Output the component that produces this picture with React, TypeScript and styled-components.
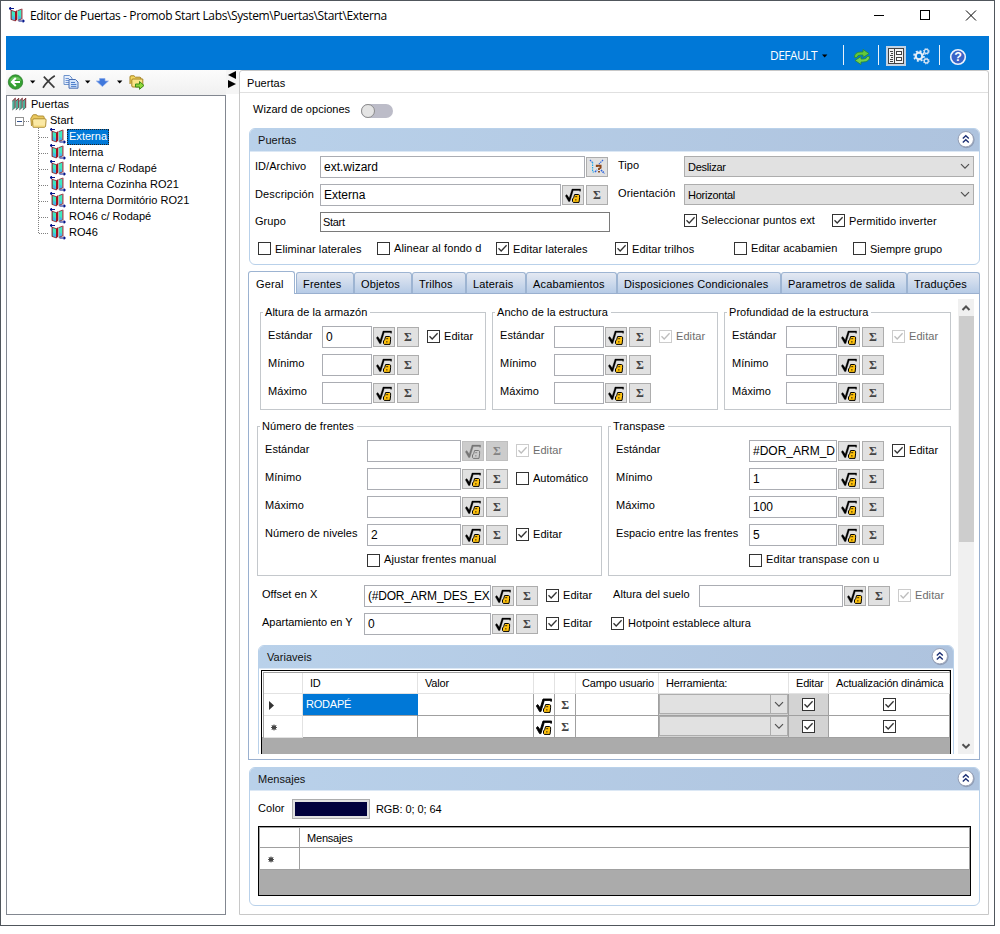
import React from "react";
import styled, { createGlobalStyle, css } from "styled-components";

const Global = createGlobalStyle`
  html, body { margin: 0; padding: 0; background: #fff; }
  body { font-family: "Liberation Sans", Arial, sans-serif; font-size: 11px; line-height: 14px; letter-spacing: 0.04px; color: #000; overflow: hidden; }
  *, *::before, *::after { box-sizing: border-box; }
  svg { display: block; flex: none; }
`;

/* ---------- window frame ---------- */
const Window = styled.div`
  width: 995px; height: 926px; border: 1px solid #50565c; background: #fff;
  display: flex; flex-direction: column;
`;
const TitleBar = styled.header`
  height: 35px; flex: none; display: flex; align-items: flex-start; padding: 6px 0 0 8px;
`;
const Title = styled.h1`
  margin: 1px 0 0 5px; flex: 1; font: 400 12px/16px "Open Sans", "Noto Sans", sans-serif; letter-spacing: -0.37px; white-space: nowrap;
`;
const WindowButtons = styled.div`
  display: flex; gap: 34px; padding: 3px 17px 0 0;
`;
const Ribbon = styled.div`
  height: 34px; flex: none; margin: 0 5px; background: #0078d7; display: flex; justify-content: flex-end; padding-right: 21px;
`;
const Profile = styled.span`
  display: flex; align-items: center; gap: 5px; margin: 7px 15px 0 0; height: 28px; padding-bottom: 2px;
  color: #fff; font: 400 12px/16px "Open Sans", "Noto Sans", sans-serif; letter-spacing: -0.55px;
`;
const RibbonDivider = styled.i<{ $gap: number }>`
  width: 1px; height: 20px; margin: 9px ${(p) => p.$gap}px 0 0; background: #e8f1fa;
`;
const RibbonIcon = styled.span<{ $gap: number; $top: number; $active?: boolean }>`
  display: grid; place-items: center; width: 20px; height: 20px;
  margin: ${(p) => p.$top}px ${(p) => p.$gap}px 0 0;
  background: ${(p) => (p.$active ? "#c3d3e3" : "transparent")};
`;
const Workspace = styled.div`
  flex: 1; display: flex; padding: 0 5px; min-height: 0;
`;

/* ---------- left side ---------- */
const Sidebar = styled.aside`
  width: 220px; flex: none; display: flex; flex-direction: column;
`;
const Toolbar = styled.div`
  height: 25px; flex: none; display: flex; align-items: center; padding: 0 0 1px 1px;
  background: linear-gradient(#fcfcfc, #f0f0f0);
`;
const Tool = styled.span<{ $w: number }>`
  width: ${(p) => p.$w}px; display: flex;
`;
const Tree = styled.div`
  height: 820px; border: 1px solid #828790; background: #fff;
`;
const TreeRow = styled.div<{ $indent: number }>`
  position: relative; height: 16px; display: flex; align-items: flex-start; padding-left: ${(p) => p.$indent}px;
`;
const TreeText = styled.span<{ $selected?: boolean }>`
  height: 16px; padding: 0 2px; line-height: 17px; white-space: nowrap; letter-spacing: 0.02px;
  ${(p) => p.$selected && css`background: #0078d7; color: #fff; outline: 1px dotted #222; outline-offset: -1px; margin-top: 1px; line-height: 15px;`}
`;
const Expander = styled.i`
  width: 9px; height: 9px; margin: 5px 0 0 0; border: 1px solid #919191; position: relative;
  &::after { content: ""; position: absolute; left: 1px; right: 1px; top: 3px; height: 1px; background: #33518f; }
`;
const Dots = styled.i<{ $w: number }>`
  width: ${(p) => p.$w}px; height: 1px; margin-top: 9px;
  background: repeating-linear-gradient(90deg, #808080 0 1px, transparent 1px 2px);
`;
const Children = styled.div`
  margin-left: 31px;
  background: repeating-linear-gradient(#808080 0 1px, transparent 1px 2px) 0 0 / 1px 106px no-repeat;
`;
const Spacer = styled.i<{ $w: number }>`
  width: ${(p) => p.$w}px; flex: none;
`;
const FolderWrap = styled.span`
  margin-top: 2px;
`;
const RootWrap = styled.span`
  margin-top: 1px;
`;
const Splitter = styled.div`
  width: 13px; flex: none; padding: 1px 0 0 2px; background: linear-gradient(#f5f5f5, #f5f5f5) 0 0 / 13px 24px no-repeat;
`;

/* ---------- right side ---------- */
const Main = styled.main`
  width: 750px; height: 845px; border: 1px solid #c8c8c8; border-radius: 3px 3px 0 0;
`;
const MainHeader = styled.div`
  height: 22px; border-bottom: 1px solid #e0e0e0; padding: 5px 0 0 7px;
`;
const WizardRow = styled.div`
  height: 35px; display: flex; justify-content: space-between; width: 153px; padding: 9px 0 0 13px;
`;
const Toggle = styled.i`
  width: 32px; height: 14px; margin-top: 2px; border-radius: 7px; background: #bcbcc8;
  &::after { content: ""; display: block; width: 14px; height: 14px; border-radius: 7px; border: 1px solid #8c8c8c; background: #e4e4e4; }
`;
const Panel = styled.section<{ $h: number; $w: number; $ml: number; $mt?: number }>`
  width: ${(p) => p.$w}px; height: ${(p) => p.$h}px; margin: ${(p) => p.$mt ?? 0}px 0 0 ${(p) => p.$ml}px;
  border: 1px solid #b9d1ea; border-radius: 6px; background: #fff; overflow: hidden;
`;
const PanelHeader = styled.div`
  height: 22px; display: flex; justify-content: space-between; padding: 4px 4px 0 8px;
  background: linear-gradient(90deg, #b9d1ea, #aec3de);
`;
const PanelTitle = styled.span`
  color: #111;
`;
const CollapseIcon = styled.span`
  margin-top: -3px;
`;
const PanelBody = styled.div<{ $pad: string }>`
  padding: ${(p) => p.$pad}; border-top: 1px solid #dce8f5;
`;

/* ---------- form parts ---------- */
const Row = styled.div<{ $cols: string; $h?: number }>`
  display: grid; grid-template-columns: ${(p) => p.$cols}; justify-items: start; align-items: start;
  height: ${(p) => p.$h ?? 28}px; white-space: nowrap;
`;
const Label = styled.span<{ $top?: number; $ls?: number }>`
  margin-top: ${(p) => p.$top ?? 2}px; letter-spacing: ${(p) => p.$ls ?? 0.05}px; white-space: nowrap;
`;
const Input = styled.div<{ $w: number; $small?: boolean; $tight?: boolean }>`
  width: ${(p) => p.$w}px; height: 22px; border: 1px solid #abadb3; background: #fff;
  padding: 3px 0 0 3px; font-size: 12px; letter-spacing: ${(p) => (p.$tight ? -0.2 : 0)}px; white-space: nowrap;
  ${(p) => p.$small && css`height: 20px; border-color: #7a7a7a; padding: 2px 0 0 2px; font-size: 11px; letter-spacing: -0.3px;`}
`;
const Button = styled.span<{ $disabled?: boolean }>`
  width: 22px; height: 20px; margin-top: 1px; display: grid; place-items: center;
  border: 1px solid ${(p) => (p.$disabled ? "#bfbfbf" : "#adadad")}; background: ${(p) => (p.$disabled ? "#cccccc" : "#e1e1e1")};
`;
const SigmaText = styled.span<{ $disabled?: boolean }>`
  font: 700 12px/12px "Liberation Serif", serif; color: ${(p) => (p.$disabled ? "#838383" : "#444")};
`;
const Select = styled.div`
  width: 290px; height: 21px; border: 1px solid #adadad; background: #e1e1e1; display: flex; justify-content: space-between;
  padding: 3px 3px 0 3px; letter-spacing: -0.25px;
  svg { margin-top: 1px; }
`;
const CheckWrap = styled.label<{ $top: number; $disabled?: boolean }>`
  display: flex; gap: 4px; margin-top: ${(p) => p.$top}px; color: ${(p) => (p.$disabled ? "#6d6d6d" : "#000")};
`;
const CheckBox = styled.i<{ $disabled?: boolean }>`
  width: 13px; height: 13px; flex: none; border: 1px solid ${(p) => (p.$disabled ? "#cccccc" : "#333")}; background: #fff;
`;
const CheckText = styled.span<{ $dy: number; $ls: number }>`
  margin-top: ${(p) => p.$dy}px; letter-spacing: ${(p) => p.$ls}px; white-space: nowrap;
`;

/* ---------- tabs ---------- */
const Tabs = styled.nav`
  display: flex; align-items: flex-end; height: 22px; margin: 6px 0 0 8px;
`;
const Tab = styled.div<{ $w: number; $active?: boolean }>`
  width: ${(p) => p.$w}px; height: 21px; padding: 4px 0 0 6px; border: 1px solid #9db4d2; border-bottom: 0;
  border-radius: 3px 3px 0 0; background: linear-gradient(#e4e9f2, #b6cbe6); white-space: nowrap; letter-spacing: 0.16px;
  ${(p) => p.$active && css`height: 23px; padding: 5px 0 0 7px; background: #fff; position: relative; margin-bottom: -1px; margin-right: 1px;`}
`;
const TabPage = styled.div`
  width: 732px; height: 467px; margin-left: 8px; border: 1px solid #9ab0cf; background: #fff;
`;
const Viewport = styled.div`
  height: 460px; overflow: hidden; display: flex;
`;
const Scrolled = styled.div`
  width: 709px; flex: none; padding-top: 11px;
`;
const Scrollbar = styled.div`
  width: 16px; height: 455px; margin-top: 5px; background: #f0f0f0; display: flex; flex-direction: column; align-items: center;
`;
const ScrollButton = styled.span`
  height: 17px; width: 16px; display: grid; place-items: center; flex: none;
`;
const Thumb = styled.i`
  width: 15px; height: 226px; background: #cdcdcd; margin-bottom: auto;
`;
const GroupRow = styled.div<{ $ml: number; $mt?: number }>`
  display: flex; gap: 6px; margin: ${(p) => p.$mt ?? 0}px 0 0 ${(p) => p.$ml}px;
`;
const Group = styled.fieldset<{ $w: number; $h: number }>`
  width: ${(p) => p.$w}px; height: ${(p) => p.$h}px; margin: 0; min-width: 0; border: 1px solid #c4c8cc; padding: 7px 0 0 7px;
`;
const Legend = styled.legend`
  padding: 0 3px 0 2px; margin-left: -5px; height: 14px; white-space: nowrap;
`;

/* ---------- data grids ---------- */
const GridFrame = styled.div<{ $w: number; $h: number }>`
  width: ${(p) => p.$w}px; height: ${(p) => p.$h}px; border: 1px solid #000; background: #ababab;
`;
const GridInner = styled.div<{ $pad: number }>`
  margin: ${(p) => p.$pad}px 0 0 ${(p) => p.$pad}px; border-top: 1px solid #a0a0a0; border-left: 1px solid #a0a0a0;
  ${(p) => p.$pad > 0 && css`box-shadow: -1px -1px 0 #fff;`}
`;
const GridRow = styled.div<{ $cols: string; $h: number }>`
  display: grid; grid-template-columns: ${(p) => p.$cols}; height: ${(p) => p.$h}px;
`;
const Cell = styled.div<{ $kind?: "head" | "rowhead" | "selected" | "dim"; $pl?: number; $center?: boolean; $strong?: boolean }>`
  background: #fff; border-right: 1px solid #a0a0a0; border-bottom: 1px solid #a0a0a0; white-space: nowrap; overflow: hidden;
  padding: 3px 0 0 ${(p) => p.$pl ?? 3}px; letter-spacing: -0.2px;
  ${(p) => (p.$kind === "head" || p.$kind === "rowhead") && !p.$strong && css`border-color: #e2e2e2;`}
  ${(p) => p.$kind === "selected" && css`background: #0078d7; color: #fff; border-right-color: #0078d7;`}
  ${(p) => p.$kind === "dim" && css`background: #d3d3d3;`}
  ${(p) => p.$center && css`display: grid; place-items: center; padding: 0;`}
`;
const CellCombo = styled.div`
  height: 20px; margin-top: -3px; margin-left: -3px; border: 1px solid #adadad; background: #e1e1e1; display: flex; justify-content: flex-end;
`;
const ComboArrow = styled.span`
  width: 17px; border-left: 1px solid #adadad; display: grid; place-items: center;
`;
const Swatch = styled.i`
  width: 78px; height: 20px; border: 1px solid #adadad; background: #00003c; box-shadow: inset 0 0 0 2px #e1e1e1;
`;

/* ---------- icons ---------- */
const Check = ({ color = "#333" }: { color?: string }) => (
  <svg width="11" height="11" viewBox="0 0 11 11"><path d="M1.5 5.2 4.2 8 9.6 2.3" fill="none" stroke={color} strokeWidth="1.3" /></svg>
);
const Chevron = ({ up, bold }: { up?: boolean; bold?: boolean }) => (
  <svg width="10" height="10" viewBox="0 0 10 10">
    <path d={up ? "M1.5 7 5 3.5 8.5 7" : bold ? "M1.5 3.2 5 6.7 8.5 3.2" : "M1 3.2 5 7.2 9 3.2"} fill="none" stroke="#505050" strokeWidth={bold ? 2 : 1.2} />
  </svg>
);
const Caret = ({ color = "#000" }: { color?: string }) => (
  <svg width="6" height="4" viewBox="0 0 6 4"><path d="M0 .5H5.4L2.7 3.4Z" fill={color} /></svg>
);
const RootIcon = ({ disabled, tight }: { disabled?: boolean; tight?: boolean }) => {
  const ink = disabled ? "#777" : "#000";
  return (
    <svg width="16" height="16" viewBox="0 0 16 16">
      <path d="M.3 8.8 1.8 7.6 4.2 11 7 2H15.6V4.2H14.6V3.4H8.3L4.9 14.6H3.6Z" fill={ink} stroke={ink} strokeWidth={tight ? 0.9 : 0.3} />
      <path d="M9.6 7.5H13.5L14.6 8.2V10.8L14 15.4H8.3L7.5 14.4V12L8.6 10.8Z" fill={disabled ? "#cccccc" : "#ffc20e"} stroke={ink} strokeWidth="1" />
      <path d="M10.2 9.7H12.2M10 12.9H11.6" stroke={ink} strokeWidth=".8" />
    </svg>
  );
};
const DoorIcon = () => (
  <svg width="16" height="16" viewBox="0 0 16 16">
    <path d="M2 3.2 6 4.6V13.8L2 12.4Z" fill="#3fe8c0" />
    <path d="M3.2 8 6 11V13.4L3.2 12.4Z" fill="#48b4ec" />
    <path d="M2 3.2 6 4.6M2 12.4 6 13.8" stroke="#8c1a28" strokeWidth=".8" />
    <path d="M6 4.6 8.4 3V12.6L6 14.4Z" fill="#a01420" />
    <path d="M8.8 3.6 12.4 2.2V12L8.8 13.4Z" fill="#3fe8c0" />
    <path d="M9.4 8 12 10.6V12L9.4 13Z" fill="#48b4ec" />
    <path d="M8.8 3.6 12.4 2.2M8.8 13.4 12.4 12" stroke="#8c1a28" strokeWidth=".8" />
    <path d="M12.9 1.8V12.4M2.1 3V12.6" stroke="#8c1220" strokeWidth="1" />
    <path d="M.3 1.5H5M1.8 .1 .4 1.5 1.8 2.9M9.5 14H15.2M13.7 12.6 15.2 14 13.7 15.4" fill="none" stroke="#06178c" strokeWidth="1.2" />
  </svg>
);
const DoorsIcon = () => (
  <svg width="15" height="14" viewBox="0 0 15 14">
    {[0, 3.5, 7, 10.5].map((x) => (
      <g key={x}>
        <path d={`M${x + 0.3} 4 L${x + 3.2} 1.4V10.4L${x + 0.3} 13Z`} fill="#4fae98" />
        <path d={`M${x + 3.2} 1V10.8M${x + 0.3} 4L${x + 3.4} 1.2`} stroke="#84323a" strokeWidth="1" />
        <path d={`M${x + 0.3} 13L${x + 3.2} 10.6`} stroke="#4a4a4a" strokeWidth=".7" />
      </g>
    ))}
  </svg>
);
const FolderIcon = () => (
  <svg width="17" height="14" viewBox="0 0 17 14">
    <path d="M1.5 12 .8 4.5Q.7 3.5 1.8 3.2L2.4 1.6Q2.7 .7 3.8 .7H6.2Q7 .7 7.5 2H13Q14 2 14.2 3.2V5" fill="#e9c860" stroke="#a8862a" strokeWidth=".9" />
    <path d="M3 13.2 2.6 6.5Q2.6 4.8 4 4.8H15Q16.2 4.8 16.1 6.2L15.6 12Q15.4 13.3 14 13.3H4Q3 13.3 3 13.2Z" fill="#fbe9a4" stroke="#a8862a" strokeWidth=".9" />
    <path d="M4 12.2H14.6" stroke="#efcf6a" />
  </svg>
);
const BackIcon = () => (
  <svg width="17" height="16" viewBox="0 0 17 16">
    <circle cx="8.5" cy="8" r="7.2" fill="#35a032" stroke="#2b7f2c" strokeWidth=".8" />
    <path d="M2.6 7A6.2 6.2 0 0 1 14.4 7Q8.5 4.5 2.6 7Z" fill="#7fd36f" opacity=".7" />
    <path d="M13 8H5M8.8 4 4.8 8 8.8 12" fill="none" stroke="#fff" strokeWidth="2" />
  </svg>
);
const DeleteIcon = () => (
  <svg width="14" height="14" viewBox="0 0 14 14">
    <path d="M1.8 1.6 12.4 12.6" stroke="#3c3c3c" strokeWidth="1.7" /><path d="M12.8 .8Q6 5 1 12.8" fill="none" stroke="#3c3c3c" strokeWidth="1.7" />
  </svg>
);
const CopyIcon = () => (
  <svg width="16" height="14" viewBox="0 0 16 14">
    <path d="M1 .5H6.5L9 3V9.5H1Z" fill="#e6effc" stroke="#6f94cc" />
    <path d="M2.5 3.5H6M2.5 5.5H6M2.5 7.5H6" stroke="#6f94d4" />
    <path d="M6 4.5H12.5L15 7V13.2H6Z" fill="#d3e3fa" stroke="#4a70b4" />
    <path d="M8 7.5H12M8 9.5H13.4M8 11.4H13.4" stroke="#4f80cc" />
  </svg>
);
const DownIcon = () => (
  <svg width="13" height="9" viewBox="0 0 13 9"><path d="M3.6 .5H9V3H12.4L6.4 8.6.4 3H3.6Z" fill="#4078dc" stroke="#86a8ea" strokeWidth=".7" /></svg>
);
const MoveIcon = () => (
  <svg width="16" height="15" viewBox="0 0 16 15">
    <path d="M1 9V2Q1 .8 2 .8H5L6.5 2.2H11Q12 2.2 12 4" fill="#f5d861" stroke="#a58222" />
    <path d="M2.8 11V5Q2.8 4 4 4H13.8V11Q13.8 12 12 12H4Q2.8 12 2.8 11Z" fill="#fae487" stroke="#a58222" />
    <path d="M6.5 9H10.5V6.5L15 10.5 10.5 14.3V12H6.5Z" fill="#8fd83a" stroke="#3c8a1c" />
  </svg>
);
const SplitIcon = () => (
  <svg width="9" height="18" viewBox="0 0 9 18"><path d="M8 0V8L0 4ZM0 9V17L8 13Z" fill="#000" /></svg>
);
const CollapseGlyph = () => (
  <svg width="18" height="19" viewBox="0 0 18 19">
    <circle cx="9.4" cy="10" r="8.2" fill="#8490a8" opacity=".75" />
    <circle cx="8.8" cy="9.2" r="7.7" fill="#fff" stroke="#96a0b6" strokeWidth="1" />
    <path d="M5.8 8.6 8.8 5.8 11.8 8.6M5.8 12.6 8.8 9.8 11.8 12.6" fill="none" stroke="#1c2f73" strokeWidth="1.4" />
  </svg>
);
const WizardIcon = () => (
  <svg width="18" height="16" viewBox="0 0 18 16">
    <path d="M2 1 5 4M15 1 11 5" stroke="#2a62e0" strokeWidth="1.2" strokeDasharray="1.5 .8" />
    <path d="M4.6 3V13H7" fill="none" stroke="#20a8e8" strokeWidth="1.2" strokeDasharray="1.5 1" />
    <path d="M7 13 9 11M13 11 16.5 14.5" stroke="#2a62e0" strokeWidth="1.6" strokeDasharray="1.5 .8" />
    <path d="M8.8 8V6.8H12.6V8.8L11 9.8V11M11 12V13.6" fill="none" stroke="#8a4518" strokeWidth="1.9" />
  </svg>
);
const RefreshIcon = () => (
  <svg width="18" height="16" viewBox="0 0 18 16">
    <path d="M1.3 8.4Q1.5 3 8 3H10V.4L16 4.6 10 8.4V6H7.5Q4.5 5.8 4 8.4Z" fill="#63c83c" stroke="#2a8a34" strokeWidth=".8" />
    <path d="M16.7 7.6Q16.5 13 10 13H8V15.6L2 11.4 8 7.6V10H10.5Q13.5 10.2 14 7.6Z" fill="#74d24a" stroke="#2a8a34" strokeWidth=".8" />
  </svg>
);
const FormIcon = () => (
  <svg width="16" height="16" viewBox="0 0 16 16">
    <rect x=".5" y=".5" width="15" height="15" fill="#f4f4f4" stroke="#444" />
    <path d="M6.5 0V16M2 3.5H5M3 5.5H5M2 7.5H5M3 9.5H5M2 11.5H5M2 13.5H5" stroke="#444" />
    <rect x="8.5" y="3.5" width="5" height="3" fill="#fff" stroke="#444" />
    <rect x="8.5" y="9.5" width="5" height="3" fill="#fff" stroke="#444" />
  </svg>
);
const GearsIcon = () => (
  <svg width="17" height="17" viewBox="0 0 17 17" fill="none">
    <circle cx="6" cy="8" r="3.3" stroke="#e4eef8" strokeWidth="2.2" />
    <circle cx="6" cy="8" r="5" stroke="#e4eef8" strokeWidth="1.6" strokeDasharray="2 1.93" />
    <circle cx="13.3" cy="3.4" r="2" stroke="#d5e4f4" strokeWidth="1.3" />
    <circle cx="13.3" cy="3.4" r="2.9" stroke="#d5e4f4" strokeWidth="1" strokeDasharray="1.2 1.08" />
    <circle cx="13.3" cy="13" r="2" stroke="#d5e4f4" strokeWidth="1.3" />
    <circle cx="13.3" cy="13" r="2.9" stroke="#d5e4f4" strokeWidth="1" strokeDasharray="1.2 1.08" />
  </svg>
);
const HelpIcon = () => (
  <svg width="18" height="18" viewBox="0 0 18 18">
    <circle cx="9" cy="9" r="7.3" fill="#3a64c8" stroke="#eef3fc" strokeWidth="1.6" />
    <text x="9" y="13.4" textAnchor="middle" fontFamily="Liberation Sans" fontWeight="700" fontSize="12.5" fill="#fff">?</text>
  </svg>
);
const StarIcon = () => (
  <svg width="6" height="15" viewBox="0 -5.5 6 15">
    <rect x="1" y="1" width="4" height="4" fill="#555" />
    <path d="M3 0V6M0 3H6M.8.8 5.2 5.2M5.2.8.8 5.2" stroke="#444" strokeWidth=".9" />
  </svg>
);
const CurrentIcon = () => (
  <svg width="6" height="16" viewBox="0 0 6 16"><path d="M0 4V13L5 8.5Z" fill="#333" /></svg>
);

/* ---------- composed parts ---------- */
const CheckField = ({ text, on, disabled, top = 3, dy = 0, ls = 0.08 }: { text: string; on?: boolean; disabled?: boolean; top?: number; dy?: number; ls?: number }) => (
  <CheckWrap $top={top} $disabled={disabled}>
    <CheckBox $disabled={disabled}>{on && <Check color={disabled ? "#bdbdbd" : "#333"} />}</CheckBox>
    <CheckText $dy={dy} $ls={ls}>{text}</CheckText>
  </CheckWrap>
);
const FormulaButton = ({ disabled }: { disabled?: boolean }) => <Button $disabled={disabled}><RootIcon disabled={disabled} /></Button>;
const SigmaButton = ({ disabled }: { disabled?: boolean }) => (
  <Button $disabled={disabled}><SigmaText $disabled={disabled}>Σ</SigmaText></Button>
);
const Header = ({ title }: { title: string }) => (
  <PanelHeader><PanelTitle>{title}</PanelTitle><CollapseIcon><CollapseGlyph /></CollapseIcon></PanelHeader>
);

const MeasureGroup = ({ title, value = "", w, inputW, disabled }: { title: string; value?: string; w: number; inputW: number; disabled?: boolean }) => (
  <Group $w={w} $h={105}>
    <Legend>{title}</Legend>
    {["Estándar", "Mínimo", "Máximo"].map((name, i) => (
      <Row key={name} $cols={`54px ${inputW + 1}px 24px 30px auto`}>
        <Label>{name}</Label>
        <Input $w={inputW}>{i === 0 ? value : ""}</Input>
        <FormulaButton />
        <SigmaButton />
        {i === 0 && <CheckField text="Editar" on disabled={disabled} top={4} dy={-1} />}
      </Row>
    ))}
  </Group>
);

const tabs: [string, number][] = [
  ["Frentes", 58], ["Objetos", 58], ["Trilhos", 54], ["Laterais", 60], ["Acabamientos", 91],
  ["Disposiciones Condicionales", 164], ["Parametros de salida", 126], ["Traduções", 73],
];
const leaves = ["Externa", "Interna", "Interna c/ Rodapé", "Interna Cozinha RO21", "Interna Dormitório RO21", "RO46 c/ Rodapé", "RO46"];
const varCols = "39px 115px 116px 21px 21px 83px 130px 40px 121px";
const varHeads: [string, number][] = [["", 0], ["ID", 7], ["Valor", 7], ["", 0], ["", 0], ["Campo usuario", 6], ["Herramienta:", 7], ["Editar", 7], ["Actualización dinámica", 7]];
const frontsCols = "102px 95px 24px 30px auto";
const overlapCols = "133px 89px 24px 30px auto";

const VariableRow = ({ name, current }: { name?: string; current?: boolean }) => (
  <GridRow $cols={varCols} $h={22}>
    <Cell $kind="rowhead" $pl={current ? 5 : 7}>{current ? <CurrentIcon /> : <StarIcon />}</Cell>
    <Cell $kind={current ? "selected" : undefined}>{name}</Cell>
    <Cell />
    <Cell $center><RootIcon tight /></Cell>
    <Cell $center><SigmaText>Σ</SigmaText></Cell>
    <Cell />
    <Cell $kind="dim"><CellCombo><ComboArrow><Chevron /></ComboArrow></CellCombo></Cell>
    <Cell $kind="dim" $center><CheckBox><Check /></CheckBox></Cell>
    <Cell $center><CheckBox><Check /></CheckBox></Cell>
  </GridRow>
);

export default function App() {
  return (
    <>
      <Global />
      <Window>
        <TitleBar>
          <DoorIcon />
          <Title>Editor de Puertas - Promob Start Labs\System\Puertas\Start\Externa</Title>
          <WindowButtons>
            <svg width="12" height="12" viewBox="0 0 12 12"><path d="M1 5.5H11" stroke="#000" /></svg>
            <svg width="12" height="12" viewBox="0 0 12 12"><rect x="1.5" y=".5" width="9" height="9" fill="none" stroke="#000" /></svg>
            <svg width="12" height="12" viewBox="0 0 12 12"><path d="M1 .5 11 10.5M11 .5 1 10.5" stroke="#000" /></svg>
          </WindowButtons>
        </TitleBar>
        <Ribbon>
          <Profile>DEFAULT<Caret /></Profile>
          <RibbonDivider $gap={8} />
          <RibbonIcon $gap={6} $top={11}><RefreshIcon /></RibbonIcon>
          <RibbonDivider $gap={7} />
          <RibbonIcon $gap={5} $top={10} $active><FormIcon /></RibbonIcon>
          <RibbonIcon $gap={8} $top={10}><GearsIcon /></RibbonIcon>
          <RibbonDivider $gap={8} />
          <RibbonIcon $gap={0} $top={11}><HelpIcon /></RibbonIcon>
        </Ribbon>
        <Workspace>
          <Sidebar>
            <Toolbar>
              <Tool $w={23}><BackIcon /></Tool>
              <Tool $w={12}><Caret /></Tool>
              <Tool $w={21}><DeleteIcon /></Tool>
              <Tool $w={22}><CopyIcon /></Tool>
              <Tool $w={11}><Caret /></Tool>
              <Tool $w={21}><DownIcon /></Tool>
              <Tool $w={12}><Caret /></Tool>
              <Tool $w={16}><MoveIcon /></Tool>
            </Toolbar>
            <Tree>
              <TreeRow $indent={5}><RootWrap><DoorsIcon /></RootWrap><Spacer $w={2} /><TreeText>Puertas</TreeText></TreeRow>
              <TreeRow $indent={8}><Expander /><Dots $w={6} /><FolderWrap><FolderIcon /></FolderWrap><Spacer $w={1} /><TreeText>Start</TreeText></TreeRow>
              <Children>
                {leaves.map((leaf, i) => (
                  <TreeRow key={leaf} $indent={1}>
                    <Dots $w={10} />
                    <Spacer $w={1} />
                    <DoorIcon />
                    <Spacer $w={1} />
                    <TreeText $selected={i === 0}>{leaf}</TreeText>
                  </TreeRow>
                ))}
              </Children>
            </Tree>
          </Sidebar>
          <Splitter><SplitIcon /></Splitter>
          <Main>
            <MainHeader>Puertas</MainHeader>
            <WizardRow><Label $top={0} $ls={0.03}>Wizard de opciones</Label><Toggle /></WizardRow>

            <Panel $w={731} $h={137} $ml={9}>
              <Header title="Puertas" />
              <PanelBody $pad="4px 0 0 5px">
                <Row $cols="65px 266px 32px 66px auto">
                  <Label $top={3}>ID/Archivo</Label>
                  <Input $w={265}>ext.wizard</Input>
                  <Button><WizardIcon /></Button>
                  <Label>Tipo</Label>
                  <Select>Deslizar<Chevron /></Select>
                </Row>
                <Row $cols="65px 242px 24px 32px 66px auto">
                  <Label $top={3} $ls={0.15}>Descripción</Label>
                  <Input $w={241}>Externa</Input>
                  <FormulaButton />
                  <SigmaButton />
                  <Label $ls={0.1}>Orientación</Label>
                  <Select>Horizontal<Chevron /></Select>
                </Row>
                <Row $cols="65px 364px 148px auto" $h={30}>
                  <Label>Grupo</Label>
                  <Input $w={290} $small>Start</Input>
                  <CheckField text="Seleccionar puntos ext" on top={2} dy={-1} ls={0.12} />
                  <CheckField text="Permitido inverter" on top={2} />
                </Row>
                <Row $cols="3px 119px 119px 119px 119px 119px auto">
                  <i />
                  <CheckField text="Eliminar laterales" top={0} ls={0.12} />
                  <CheckField text="Alinear al fondo d" top={0} dy={-1} ls={0.1} />
                  <CheckField text="Editar laterales" on top={0} />
                  <CheckField text="Editar trilhos" on top={0} />
                  <CheckField text="Editar acabamien" top={0} dy={-1} ls={0.05} />
                  <CheckField text="Siempre grupo" top={0} ls={0} />
                </Row>
              </PanelBody>
            </Panel>

            <Tabs>
              <Tab $w={47} $active>Geral</Tab>
              {tabs.map(([name, w]) => <Tab key={name} $w={w}>{name}</Tab>)}
            </Tabs>
            <TabPage>
              <Viewport>
                <Scrolled>
                  <GroupRow $ml={11}>
                    <MeasureGroup title="Altura de la armazón" value="0" w={226} inputW={50} />
                    <MeasureGroup title="Ancho de la estructura" w={226} inputW={50} disabled />
                    <MeasureGroup title="Profundidad de la estructura" w={227} inputW={51} disabled />
                  </GroupRow>
                  <GroupRow $ml={8} $mt={9}>
                    <Group $w={345} $h={157}>
                      <Legend>Número de frentes</Legend>
                      <Row $cols={frontsCols}><Label>Estándar</Label><Input $w={94} /><FormulaButton disabled /><SigmaButton disabled /><CheckField text="Editar" on disabled top={4} dy={-1} /></Row>
                      <Row $cols={frontsCols}><Label>Mínimo</Label><Input $w={94} /><FormulaButton /><SigmaButton /><CheckField text="Automático" top={4} dy={-1} ls={0.02} /></Row>
                      <Row $cols={frontsCols}><Label>Máximo</Label><Input $w={94} /><FormulaButton /><SigmaButton /></Row>
                      <Row $cols={frontsCols}><Label>Número de niveles</Label><Input $w={94}>2</Input><FormulaButton /><SigmaButton /><CheckField text="Editar" on top={4} dy={-1} /></Row>
                      <Row $cols="102px auto" $h={20}><i /><CheckField text="Ajustar frentes manual" top={2} dy={-2} ls={0.1} /></Row>
                    </Group>
                    <Group $w={343} $h={157}>
                      <Legend>Transpase</Legend>
                      <Row $cols={overlapCols}><Label>Estándar</Label><Input $w={88}>#DOR_ARM_D</Input><FormulaButton /><SigmaButton /><CheckField text="Editar" on top={4} dy={-1} /></Row>
                      <Row $cols={overlapCols}><Label>Mínimo</Label><Input $w={88}>1</Input><FormulaButton /><SigmaButton /></Row>
                      <Row $cols={overlapCols}><Label>Máximo</Label><Input $w={88}>100</Input><FormulaButton /><SigmaButton /></Row>
                      <Row $cols={overlapCols}><Label>Espacio entre las frentes</Label><Input $w={88}>5</Input><FormulaButton /><SigmaButton /></Row>
                      <Row $cols="133px auto" $h={20}><i /><CheckField text="Editar transpase con u" top={2} dy={-2} ls={0.14} /></Row>
                    </Group>
                  </GroupRow>
                  <GroupRow $ml={13} $mt={9}>
                    <Row $cols="102px 128px 24px 30px 67px 86px 145px 24px 30px auto">
                      <Label>Offset en X</Label><Input $w={127} $tight>(#DOR_ARM_DES_EX</Input><FormulaButton /><SigmaButton />
                      <CheckField text="Editar" on top={4} dy={-1} />
                      <Label>Altura del suelo</Label><Input $w={144} /><FormulaButton /><SigmaButton />
                      <CheckField text="Editar" on disabled top={4} dy={-1} />
                    </Row>
                  </GroupRow>
                  <GroupRow $ml={13}>
                    <Row $cols="102px 128px 24px 30px 65px auto">
                      <Label $ls={-0.02}>Apartamiento en Y</Label><Input $w={127}>0</Input><FormulaButton /><SigmaButton />
                      <CheckField text="Editar" on top={4} dy={-1} />
                      <CheckField text="Hotpoint establece altura" on top={4} dy={-1} ls={0.05} />
                    </Row>
                  </GroupRow>
                  <Panel $w={696} $h={126} $ml={9} $mt={4}>
                    <Header title="Variaveis" />
                    <PanelBody $pad="1px 0 0 2px">
                      <GridFrame $w={690} $h={98}>
                        <GridInner $pad={1}>
                          <GridRow $cols={varCols} $h={21}>
                            {varHeads.map(([text, pl], i) => <Cell key={i} $kind="head" $pl={pl}>{text}</Cell>)}
                          </GridRow>
                          <VariableRow name="RODAPÉ" current />
                          <VariableRow />
                        </GridInner>
                      </GridFrame>
                    </PanelBody>
                  </Panel>
                </Scrolled>
                <Scrollbar>
                  <ScrollButton><Chevron up bold /></ScrollButton>
                  <Thumb />
                  <ScrollButton><Chevron bold /></ScrollButton>
                </Scrollbar>
              </Viewport>
            </TabPage>

            <Panel $w={731} $h={139} $ml={9} $mt={7}>
              <Header title="Mensajes" />
              <PanelBody $pad="8px 0 0 8px">
                <Row $cols="34px 84px auto" $h={27}>
                  <Label>Color</Label><Swatch /><Label $top={3} $ls={-0.08}>RGB: 0; 0; 64</Label>
                </Row>
                <GridFrame $w={713} $h={70}>
                  <GridInner $pad={0}>
                    <GridRow $cols="40px 670px" $h={20}><Cell $kind="head" $strong /><Cell $kind="head" $strong $pl={7}>Mensajes</Cell></GridRow>
                    <GridRow $cols="40px 670px" $h={22}><Cell $pl={8}><StarIcon /></Cell><Cell /></GridRow>
                  </GridInner>
                </GridFrame>
              </PanelBody>
            </Panel>
          </Main>
        </Workspace>
      </Window>
    </>
  );
}
